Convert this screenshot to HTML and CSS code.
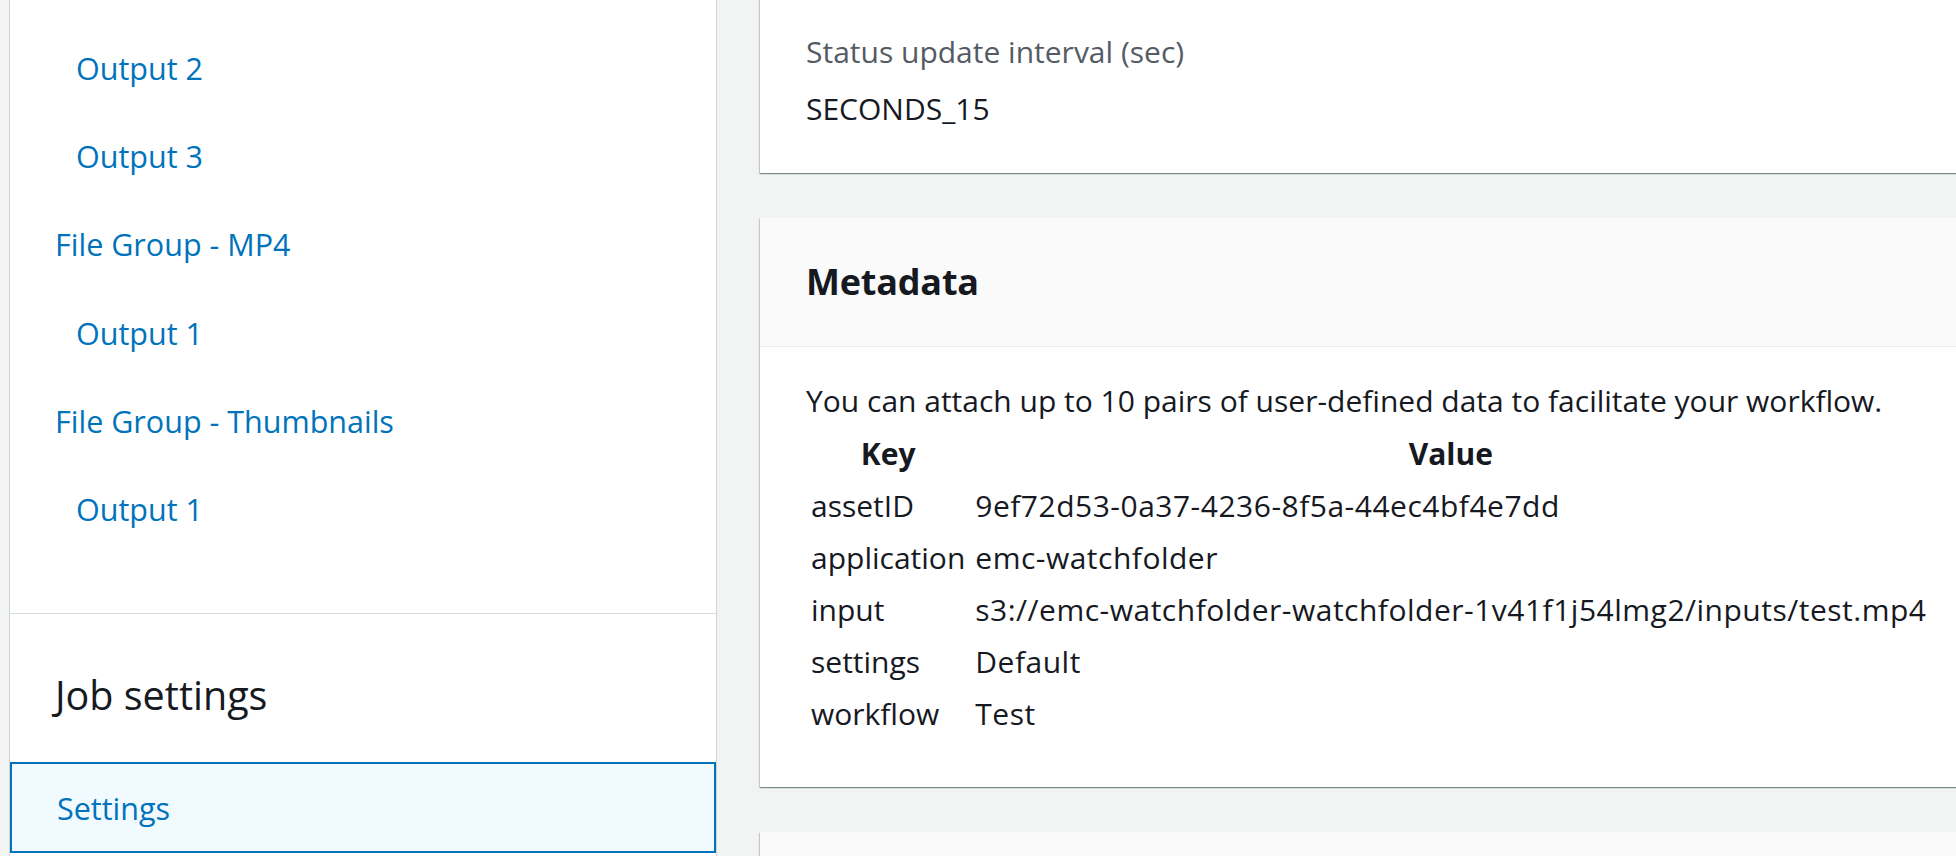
FILE: index.html
```html
<!DOCTYPE html>
<html lang="en">
<head>
<meta charset="utf-8">
<title>Job details</title>
<link rel="stylesheet" href="styles.css">
</head>
<body>
<div class="layout">
  <aside class="side">
    <nav class="tree">
      <a class="item sub" href="#">Output 2</a>
      <a class="item sub" href="#">Output 3</a>
      <a class="item" href="#">File Group - MP4</a>
      <a class="item sub" href="#">Output 1</a>
      <a class="item" href="#">File Group - Thumbnails</a>
      <a class="item sub" href="#">Output 1</a>
    </nav>
    <div class="side-sec">
      <h2 class="side-title">Job settings</h2>
      <a class="selected" href="#">Settings</a>
    </div>
  </aside>
  <main class="content">
    <section class="card card-first">
      <div class="label">Status update interval (sec)</div>
      <div class="value">SECONDS_15</div>
    </section>
    <section class="card">
      <header class="card-head"><h2>Metadata</h2></header>
      <div class="card-body">
        <p class="intro">You can attach up to 10 pairs of user-defined data to facilitate your workflow.</p>
        <table class="meta">
          <thead>
            <tr><th>Key</th><th>Value</th></tr>
          </thead>
          <tbody>
            <tr><td>assetID</td><td class="v">9ef72d53-0a37-4236-8f5a-44ec4bf4e7dd</td></tr>
            <tr><td>application</td><td class="v">emc-watchfolder</td></tr>
            <tr><td>input</td><td class="v">s3://emc-watchfolder-watchfolder-1v41f1j54lmg2/inputs/test.mp4</td></tr>
            <tr><td>settings</td><td class="v">Default</td></tr>
            <tr><td>workflow</td><td class="v">Test</td></tr>
          </tbody>
        </table>
      </div>
    </section>
    <section class="card">
      <header class="card-head card-head-next"></header>
    </section>
  </main>
</div>
</body>
</html>
```
FILE: styles.css
```css
html, body {
  margin: 0;
  padding: 0;
  height: 100%;
  overflow: hidden;
}
body {
  background: #f2f3f3;
  font-family: "Open Sans", "Noto Sans", sans-serif;
  color: #16191f;
}
.layout {
  display: flex;
  align-items: flex-start;
  height: 856px;
}
.side {
  margin-left: 9px;
  width: 706px;
  flex: none;
  background: #fff;
  border-left: 1px solid #cfd5d5;
  border-right: 1px solid #cfd5d5;
  height: 856px;
  display: flex;
  flex-direction: column;
}
.tree {
  display: flex;
  flex-direction: column;
  padding: 24px 0 60px;
  border-bottom: 1px solid #d9dcdc;
}
.item {
  display: block;
  height: 88.2px;
  line-height: 88px;
  font-size: 30.5px;
  color: #0073bb;
  text-decoration: none;
  padding-left: 45px;
  white-space: nowrap;
}
.item.sub {
  padding-left: 66px;
}
.side-sec {
  padding-top: 58px;
}
.side-title {
  margin: 0 0 44px;
  padding-left: 45px;
  font-size: 39.5px;
  font-weight: 400;
  line-height: 46px;
  color: #16191f;
}
.selected {
  display: block;
  border: 2px solid #0073bb;
  background: #f1faff;
  color: #0073bb;
  text-decoration: none;
  font-size: 30.5px;
  line-height: 42px;
  padding: 23px 0 22px 45px;
}
.content {
  flex: 1;
  margin-left: 43px;
  margin-right: -40px;
  display: flex;
  flex-direction: column;
  gap: 45px;
}
.card {
  background: #fff;
  box-shadow: 0 1px 1px 0 rgba(0, 28, 36, 0.3), 1px 1px 1px 0 rgba(0, 28, 36, 0.15), -1px 1px 1px 0 rgba(0, 28, 36, 0.15);
}
.card-first {
  margin-top: -20px;
  padding: 52px 46px 43px;
}
.label {
  font-size: 30px;
  line-height: 40px;
  color: #545b64;
}
.value {
  margin-top: 16px;
  font-size: 30px;
  line-height: 42px;
}
.card-head {
  background: #fafafa;
  border-bottom: 1px solid #eaeded;
  height: 128px;
  display: flex;
  align-items: center;
  padding: 0 46px;
}
.card-head h2 {
  margin: 0;
  font-size: 36px;
  font-weight: 700;
  letter-spacing: -0.2px;
  line-height: 48px;
}
.card-head-next {
  border-bottom: none;
  height: 60px;
}
.card-body {
  padding: 33px 46px 47px;
}
.intro {
  margin: 0 0 6px;
  font-size: 30px;
  line-height: 42px;
}
.meta {
  border-collapse: collapse;
  font-size: 30px;
  line-height: 42px;
}
.meta th {
  font-weight: 700;
  text-align: center;
  padding: 5px 5px;
}
.meta td {
  padding: 5px 5px;
  white-space: nowrap;
  text-align: left;
}
.meta td.v {
  letter-spacing: 0.5px;
}
```
